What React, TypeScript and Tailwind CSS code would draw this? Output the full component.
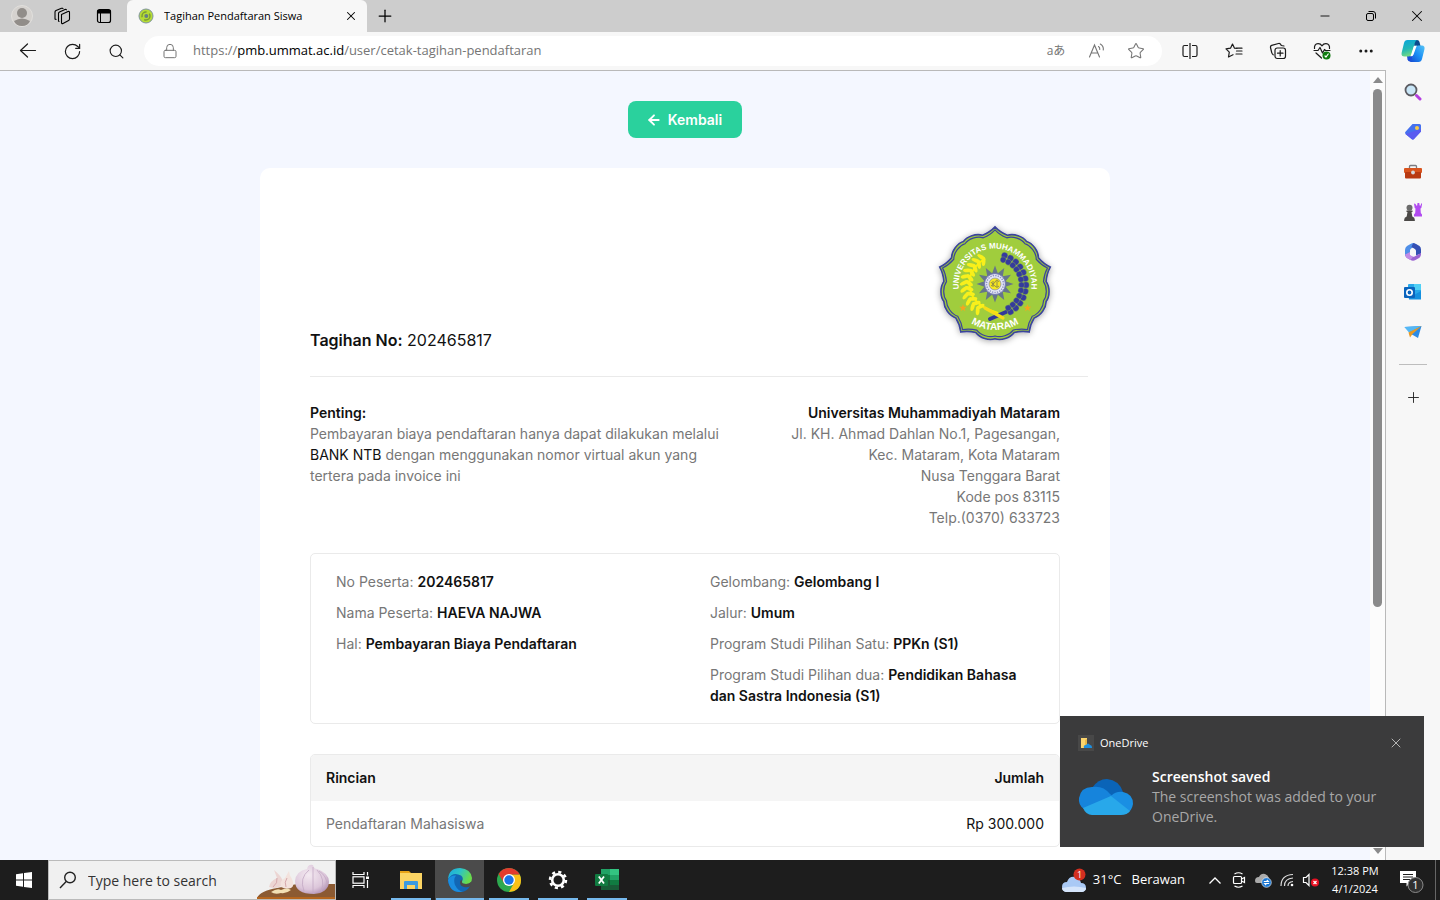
import type { ReactNode } from 'react';
import { ArrowLeft, Lock, Minus, MoreHorizontal, Plus, RotateCw, Search, Star, X } from 'lucide-react';

const details = {
  left: [
    ['No Peserta:', '202465817'],
    ['Nama Peserta:', 'HAEVA NAJWA'],
    ['Hal:', 'Pembayaran Biaya Pendaftaran'],
  ],
  right: [
    ['Gelombang:', 'Gelombang I'],
    ['Jalur:', 'Umum'],
    ['Program Studi Pilihan Satu:', 'PPKn (S1)'],
    ['Program Studi Pilihan dua:', 'Pendidikan Bahasa dan Sastra Indonesia (S1)'],
  ],
};

// polar helper for the crest, angle in degrees clockwise from the top
const polar = (r: number, deg: number, cx = 65, cy = 67) => {
  const a = ((deg - 90) * Math.PI) / 180;
  return `${(cx + r * Math.cos(a)).toFixed(2)} ${(cy + r * Math.sin(a)).toFixed(2)}`;
};

const crestPath = (s: number) => {
  let d = `M${polar(59 * s, 0)}`;
  for (let k = 0; k < 5; k++) {
    const b = k * 72;
    d += `Q${polar(54 * s, b + 5)} ${polar(52 * s, b + 14)}`;
    d += `C${polar(56 * s, b + 20)} ${polar(57 * s, b + 30)} ${polar(54.5 * s, b + 36)}`;
    d += `C${polar(57 * s, b + 42)} ${polar(56 * s, b + 52)} ${polar(52 * s, b + 58)}`;
    d += `Q${polar(54 * s, b + 67)} ${polar(59 * s, b + 72)}`;
  }
  return d + 'Z';
};

const starPoints = (cx: number, cy: number, outer: number, inner: number, n: number) =>
  Array.from({ length: n * 2 }, (_, i) => polar(i % 2 ? inner : outer, (i * 180) / n, cx, cy)).join(' ');

function Crest({ className }: { className?: string }) {
  return (
    <svg viewBox="0 0 130 130" className={className} role="img" aria-label="Universitas Muhammadiyah Mataram">
      <defs>
        <filter id="crest-shadow" x="-20%" y="-20%" width="140%" height="140%">
          <feDropShadow dx="0" dy="1" stdDeviation="3" floodColor="#000" floodOpacity="0.35" />
        </filter>
        <path id="arc-top" d="M31.5 81.500A36.5 36.5 0 1 1 98.500 81.500" />
        <path id="arc-bottom" d="M19 66A46 46 0 0 0 111 66" />
      </defs>
      <path d={crestPath(0.985)} fill="#9fcb3c" stroke="#3b449b" strokeWidth="1.6" filter="url(#crest-shadow)" />
      <path d={crestPath(0.935)} fill="#a0cd3d" stroke="#3b449b" strokeWidth="1.2" />
      <g fill="#fff" className="font-['Liberation_Sans',sans-serif] font-bold">
        <text fontSize="8" textAnchor="middle">
          <textPath href="#arc-top" startOffset="50%">UNIVERSITAS MUHAMMADIYAH</textPath>
        </text>
        <text fontSize="10" textAnchor="middle">
          <textPath href="#arc-bottom" startOffset="50%">MATARAM</textPath>
        </text>
      </g>
      <path d="M54 41Q32 57 43 79Q50 90 68 95" fill="none" stroke="#fff200" strokeWidth="2" />
      {Array.from({ length: 11 }, (_, i) => {
        const deg = 334 - i * 12;
        return (
          <g key={i} fill="#f8ef1c">
            <ellipse rx="4.6" ry="1.900" transform={`translate(${polar(31, deg)}) rotate(${deg + 60})`} />
            <ellipse rx="4.4" ry="1.900" transform={`translate(${polar(26, deg)}) rotate(${deg + 120})`} />
          </g>
        );
      })}
      <path d="M76 94L60 101" stroke="#32389a" strokeWidth="4" strokeLinecap="round" />
      <path d="M55 90L73 100" stroke="#f5dc18" strokeWidth="3.200" strokeLinecap="round" />
      {Array.from({ length: 12 }, (_, i) => {
        const deg = 18 + i * 12;
        return (
          <g key={i} fill="#353b9c" stroke="#a0cd3d" strokeWidth="0.3">
            <ellipse rx="3.200" ry="3.200" transform={`translate(${polar(31, deg)}) rotate(${deg})`} />
            <ellipse rx="3" ry="3" transform={`translate(${polar(26.5, deg)}) rotate(${deg})`} />
          </g>
        );
      })}
      <polygon points={starPoints(65, 66, 18.5, 11, 12)} fill="#66758a" />
      <circle cx="65" cy="66" r="10.5" fill="#e8eaf4" stroke="#7176b5" strokeWidth="1" />
      <circle cx="65" cy="66" r="8.5" fill="none" stroke="#8f94c8" strokeWidth="1.5" strokeDasharray="1.4 1.1" />
      <circle cx="65" cy="66" r="6" fill="#f6e821" stroke="#7176b5" strokeWidth="0.6" />
      <path d="M61 64q2 4 4 0t4 0M61 68q2-3 4 0t4 0M63 63v6M67 63v6" fill="none" stroke="#7d7a4c" strokeWidth="0.8" />
      <polygon points={starPoints(33, 90, 4, 1.6, 5)} fill="#f7a51f" />
      <polygon points={starPoints(97.5, 90, 4, 1.6, 5)} fill="#f7a51f" />
    </svg>
  );
}

function Favicon() {
  return (
    <svg viewBox="0 0 16 16" className="size-4 shrink-0">
      <circle cx="8" cy="8" r="7" fill="#b5dc35" stroke="#7f94a0" />
      <circle cx="8" cy="8" r="4" fill="none" stroke="#7a9a35" strokeWidth="1.4" strokeDasharray="8 3" />
      <circle cx="8.300" cy="8" r="2" fill="#667e85" />
    </svg>
  );
}

function ToolButton({ label, className = 'w-11', children }: { label: string; className?: string; children: ReactNode }) {
  return (
    <button aria-label={label} className={`flex h-full shrink-0 items-center justify-center ${className}`}>
      {children}
    </button>
  );
}

function TabStrip() {
  return (
    <header className="flex h-8 shrink-0 items-center bg-[#cdcdcd] text-black">
      <ToolButton label="Profile">
        <svg viewBox="0 0 22 22" className="size-[22px]">
          <circle cx="11" cy="11" r="10.500" fill="#d5d2cf" stroke="#e1dfdc" />
          <circle cx="11" cy="8" r="5" fill="#918d89" />
          <path d="M3 16q8-5 16 0q-2 5-8 5t-8-5z" fill="#918d89" />
        </svg>
      </ToolButton>
      <ToolButton label="Workspaces" className="w-9">
        <svg viewBox="0 0 18 18" className="size-[18px]" fill="none" stroke="currentColor" strokeWidth="1.100" strokeLinejoin="round">
          <path d="M8.500 7.500L15 4.500q1.500-.5 1.500 1v6.500q0 1-.9 1.500L10 16.500q-1.500.6-1.500-1z" />
          <path d="M6.500 14.500l-1-.3V6.500q0-1 1-1.500L12 2.500q1.500-.4 1.500.7" />
          <path d="M3.500 12.500l-1.500-.4V5q0-1 1-1.500L8.500 1.300q1.500-.4 1.500.7" />
        </svg>
      </ToolButton>
      <ToolButton label="Tab actions" className="w-[47px]">
        <svg viewBox="0 0 16 16" className="size-4">
          <rect x="1.500" y="1.500" width="13" height="13" rx="2" fill="none" stroke="currentColor" strokeWidth="1.200" />
          <path d="M1.500 2h13v3.500h-13z" fill="currentColor" />
          <path d="M4.500 5v9.500" stroke="currentColor" />
        </svg>
      </ToolButton>
      <div className="flex h-full w-60 items-center rounded-t-md bg-[#f7f7f7] pl-[11px] pr-2">
        <Favicon />
        <span className="ml-2.5 flex-1 truncate text-[11px]">Tagihan Pendaftaran Siswa</span>
        <button aria-label="Close tab" className="flex size-4 items-center justify-center">
          <X size={14} strokeWidth={1.8} />
        </button>
      </div>
      <ToolButton label="New tab" className="w-[35px]">
        <Plus size={20} strokeWidth={1.5} />
      </ToolButton>
      <div className="ml-auto flex h-full">
        <ToolButton label="Minimize" className="w-[46px]">
          <Minus size={14} strokeWidth={1.5} />
        </ToolButton>
        <ToolButton label="Restore" className="w-[46px]">
          <svg viewBox="0 0 12 12" className="size-3" fill="none" stroke="currentColor">
            <rect x="1.500" y="3.500" width="7" height="7" rx="1.500" />
            <path d="M3.500 1.500H8q2.500 0 2.500 2.500v4.500" />
          </svg>
        </ToolButton>
        <ToolButton label="Close" className="w-[46px]">
          <X size={18} strokeWidth={1.4} />
        </ToolButton>
      </div>
    </header>
  );
}

function CopilotIcon() {
  return (
    <svg viewBox="0 0 24 24" className="size-6">
      <defs>
        <linearGradient id="cp-a" x1="0" y1="0" x2="0.300" y2="1">
          <stop offset="0" stopColor="#08a4dc" />
          <stop offset="0.600" stopColor="#23b8b5" />
          <stop offset="1" stopColor="#72d984" />
        </linearGradient>
        <linearGradient id="cp-b" x1="1" y1="0" x2="0" y2="1">
          <stop offset="0" stopColor="#56c4f5" />
          <stop offset="0.500" stopColor="#1b8ff5" />
          <stop offset="1" stopColor="#1646cf" />
        </linearGradient>
      </defs>
      <path d="M12 1h4q2 0 2.500 2l1 4h-6z" fill="#0a4a8c" />
      <path d="M6 17h6l-1.500 5.500H9q-2 0-2.500-2z" fill="#1c4fd8" />
      <path d="M6.500 1H16q-1.500.5-2.200 3l-3 11q-.8 2.500-3.300 2.500H3.500Q0 17.500.6 14L3 4q.7-3 3.500-3z" fill="url(#cp-a)" />
      <path d="M17.500 23H8.500q1.500-.5 2.200-3l3-11q.8-2.500 3.300-2.500h4q3 0 2.500 3.500L21 20q-.7 3-3.500 3z" fill="url(#cp-b)" />
      <path d="M12.800 7.500q1-1 3-1l-3.300 9q-1 2-3 2z" fill="#fff" />
    </svg>
  );
}

function Toolbar() {
  return (
    <div className="flex h-[38px] shrink-0 items-center bg-[#f7f7f7] pl-1.5 text-[#1b1b1b]">
      <ToolButton label="Back">
        <svg viewBox="0 0 18 16" className="h-4 w-[18px]" fill="none" stroke="currentColor" strokeWidth="1.200" strokeLinecap="round" strokeLinejoin="round">
          <path d="M16.500 7.500H1.500M8.500 1L1.500 7.500L8.500 14" />
        </svg>
      </ToolButton>
      <ToolButton label="Refresh">
        <RotateCw size={19} strokeWidth={1.5} />
      </ToolButton>
      <ToolButton label="Search">
        <Search size={17} strokeWidth={1.6} />
      </ToolButton>
      <div className="ml-1.5 mr-1.5 flex h-[30px] flex-1 items-center rounded-full bg-white pl-[18px] pr-1.5 text-[#757575]">
        <Lock size={16} strokeWidth={1.5} />
        <div role="textbox" aria-label="Address" contentEditable suppressContentEditableWarning className="ml-[15px] flex-1 truncate text-[13px] outline-none">
          https://<span className="text-black">pmb.ummat.ac.id</span>/user/cetak-tagihan-pendaftaran
        </div>
        <button aria-label="Translate" className="w-10 font-['Open_Sans','Noto_Sans_CJK_JP',sans-serif] text-[12px]">
          aあ
        </button>
        <button aria-label="Read aloud" className="flex w-10 justify-center">
          <svg viewBox="0 0 17 16" className="h-4 w-[17px]" fill="none" stroke="currentColor" strokeWidth="1.100" strokeLinecap="round">
            <path d="M1.500 14L6.500 2L11.500 14M3.200 10h6.600M10.500 3.500q1.500 1 1.300 3M12.300 1q3.500 2 3 6" />
          </svg>
        </button>
        <button aria-label="Add to favorites" className="flex w-10 justify-center">
          <Star size={18} strokeWidth={1.4} />
        </button>
      </div>
      <ToolButton label="Split screen">
        <svg viewBox="0 0 16 16" className="size-4" fill="none" stroke="currentColor" strokeWidth="1.200">
          <path d="M6 2.500H2.500Q1 2.500 1 4v8q0 1.500 1.500 1.500H6M10 2.500h3.500Q15 2.500 15 4v8q0 1.500-1.500 1.500H10M8 0v16" />
        </svg>
      </ToolButton>
      <ToolButton label="Favorites">
        <svg viewBox="0 0 18 16" className="h-4 w-[18px]" fill="none" stroke="currentColor" strokeWidth="1.200" strokeLinejoin="round" strokeLinecap="round">
          <path d="M12 5.500L9.500 5.200L7.500 1L5.500 5.200L1 5.900L4.300 9.200L3.500 14L8 11.700M11.500 8H17M11 5.200h6M11 11h6" />
        </svg>
      </ToolButton>
      <ToolButton label="Collections">
        <svg viewBox="0 0 18 18" className="size-[18px]" fill="none" stroke="currentColor" strokeWidth="1.200" strokeLinecap="round">
          <rect x="6" y="6" width="10.500" height="10.500" rx="2.200" />
          <path d="M11.200 8.500v5.500M8.500 11.200H14M4.200 12.800Q3 12 2.700 10.500L1.500 5.500Q1.200 4 2.700 3.400L9.500 1.500Q11.500 1 12.300 3.500M12.300 3.500L15 4" />
        </svg>
      </ToolButton>
      <ToolButton label="Browser essentials">
        <svg viewBox="0 0 18 18" className="size-[18px]" fill="none" stroke="currentColor" strokeWidth="1.200" strokeLinecap="round" strokeLinejoin="round">
          <path d="M1.500 6.500Q1 2 5 1.700Q7.500 1.600 9 3.800Q10.500 1.600 13 1.700Q17 2 16.500 6.500M1 8.500h4L7 5.500L9.500 11L11.500 7.500L12.500 8.500H17M3 11L8.500 16" />
          <circle cx="13.500" cy="13.500" r="4" fill="#107c10" stroke="none" />
          <path d="M12 14l1 1l2.200-3" stroke="#fff" />
        </svg>
      </ToolButton>
      <ToolButton label="Settings and more">
        <MoreHorizontal size={18} strokeWidth={2} />
      </ToolButton>
      <ToolButton label="Copilot" className="w-[52px] pr-0.5">
        <CopilotIcon />
      </ToolButton>
    </div>
  );
}

const sidebarItems: { label: string; icon: ReactNode }[] = [
  {
    label: 'Search',
    icon: (
      <>
        <path d="M12.500 12.500L16 16" stroke="#b43ee0" strokeWidth="3" strokeLinecap="round" />
        <circle cx="7" cy="7" r="5.500" fill="#c9e6f7" stroke="#5c5c62" strokeWidth="1.800" />
      </>
    ),
  },
  {
    label: 'Shopping',
    icon: (
      <>
        <path d="M8.500 1h7q1.500 0 1.500 1.500v6L10 16q-1.200 1-2.400 0L1.500 11q-1-1.200 0-2.300z" fill="#4571ee" />
        <path d="M1.500 11L7.600 16q1.200 1 2.400 0L17 8.500V6z" fill="#5a5cf0" />
        <circle cx="13" cy="5" r="2" fill="#f7c948" />
      </>
    ),
  },
  {
    label: 'Tools',
    icon: (
      <>
        <path d="M5.500 5V3.500Q5.500 2.500 6.500 2.500h5q1 0 1 1V5" fill="none" stroke="#7b7b80" strokeWidth="1.300" />
        <rect x="0" y="5" width="18" height="5" rx="1" fill="#d9541e" />
        <rect x="1" y="9" width="16" height="6.500" rx="1" fill="#b83a12" />
        <circle cx="9" cy="9.500" r="1.900" fill="#d5d8dc" />
      </>
    ),
  },
  {
    label: 'Games',
    icon: (
      <>
        <path d="M10 .5l1.700.4.3 1.600h1.200L13.500 0h1.800l.3 2.500h1.200L17 .5h1.200L17.300 5l-.8.500.3 4.500 1.200 1.500v2h-8v-2l1.200-1.500.3-4.500-.8-.5z" fill="#b14bf0" />
        <circle cx="5.500" cy="4.800" r="3" fill="#6b6b6b" />
        <path d="M2.500 7.500h6v1.500h-1l.8 4.500q3 1 2.500 4.500H.2q-.5-3.500 2.500-4.500l.8-4.500h-1z" fill="#4b4947" />
      </>
    ),
  },
  {
    label: 'Microsoft 365',
    icon: (
      <>
        <path d="M10 0Q8 0 6.500 1L3 3Q1 4.500 1 7v4q0 2 1.500 3L6 11.500V7.500Q6 6 7.500 5.200L13 2z" fill="#4f8fe8" />
        <path d="M9 .2Q10.500 0 12 1l3.500 2Q17 4 17 6.500v4l-5 2V8Q12 6.500 10.500 5.700L7.500 4z" fill="#3450b4" />
        <path d="M1.200 11.500Q1.500 14 3 15l3.500 2q2.500 1.300 5 0l4-2.300Q17 13.500 17 11v-1L11 13.300q-2 1-3.500 0L5 12z" fill="#9b63d2" />
        <path d="M1.200 11.500Q1.500 14 3 15l3.500 2L9 13.800L6 12V9z" fill="#c18be6" />
        <circle cx="9" cy="9.200" r="2.800" fill="#f7f7f7" />
      </>
    ),
  },
  {
    label: 'Outlook',
    icon: (
      <>
        <rect x="4" y="1" width="13" height="13" rx="1" fill="#28a8ea" />
        <path d="M10 1h7v6h-7z" fill="#50d0f5" />
        <path d="M4 10l6 2l7-4v8.500H5z" fill="#1490df" />
        <rect x="0" y="4" width="11" height="11" rx="1" fill="#0a64bd" />
        <circle cx="5.500" cy="9.500" r="2.700" fill="none" stroke="#fff" strokeWidth="1.600" />
      </>
    ),
  },
  {
    label: 'Drop',
    icon: (
      <>
        <path d="M.5 4L17.500 3L14 15L8 11.500z" fill="#2b8be6" />
        <path d="M.5 4L17.500 3L5 9.500z" fill="#54b8f5" />
        <path d="M17.500 3L4.500 9.500L6 14.500L8.500 11z" fill="#e89a24" />
      </>
    ),
  },
];

function Sidebar() {
  return (
    <aside className="flex w-[54px] shrink-0 flex-col items-center bg-[#f7f7f7] pt-0.5">
      {sidebarItems.map((item) => (
        <button key={item.label} aria-label={item.label} className="flex h-10 w-full items-center justify-center">
          <svg viewBox="0 0 18 18" className="size-[18px]">
            {item.icon}
          </svg>
        </button>
      ))}
      <hr className="mt-3 w-7 border-[#bdbdbd]" />
      <button aria-label="Customize" className="mt-5 flex h-6 w-full items-center justify-center text-[#222]">
        <Plus size={17} strokeWidth={1.3} />
      </button>
    </aside>
  );
}

function DetailColumn({ rows }: { rows: string[][] }) {
  return (
    <dl className="flex flex-col gap-2.5 px-[25px]">
      {rows.map(([label, value]) => (
        <div key={label}>
          <dt className="inline">{label}</dt> <dd className="inline font-semibold text-[#111]">{value}</dd>
        </div>
      ))}
    </dl>
  );
}

function Invoice() {
  return (
    <main className="flex-1 overflow-hidden bg-[#f4f7ff] pt-[30px] font-['Inter',sans-serif] text-[14px] leading-[21px] text-[#777]">
      <div className="flex justify-center">
        <a href="#kembali" className="flex h-[37px] items-center gap-1.5 rounded-lg bg-[#2ad19d] pl-[18px] pr-5 font-semibold text-white">
          <ArrowLeft size={16} strokeWidth={2.8} />
          Kembali
        </a>
      </div>
      <div className="mx-auto mt-[30px] max-w-[850px] rounded-[10px] bg-white px-[50px] pb-12 pt-[50px]">
        <div className="flex items-end justify-between">
          <p className="text-[16px] leading-4 text-[#111]">
            <b className="font-semibold">Tagihan No:</b> 202465817
          </p>
          <Crest className="size-[130px] overflow-visible" />
        </div>
        {/* the rule runs into the right padding of the card */}
        <hr className="-mr-7 mt-7 border-[#eaeaea]" />
        <div className="mt-[25px] flex justify-between gap-5">
          <p className="max-w-[420px]">
            <b className="font-semibold text-[#111]">Penting:</b>
            <br />
            Pembayaran biaya pendaftaran hanya dapat dilakukan melalui <span className="text-[#111]">BANK NTB</span> dengan
            menggunakan nomor virtual akun yang tertera pada invoice ini
          </p>
          <address className="text-right not-italic">
            <b className="font-semibold text-[#111]">Universitas Muhammadiyah Mataram</b>
            <br />
            Jl. KH. Ahmad Dahlan No.1, Pagesangan,
            <br />
            Kec. Mataram, Kota Mataram
            <br />
            Nusa Tenggara Barat
            <br />
            Kode pos 83115
            <br />
            Telp.(0370) 633723
          </address>
        </div>
        <div className="mt-[25px] grid grid-cols-2 rounded-[5px] border border-[#eaeaea] py-[17px]">
          <DetailColumn rows={details.left} />
          <DetailColumn rows={details.right} />
        </div>
        <div className="mt-[30px] overflow-hidden rounded-[5px] border border-[#eaeaea]">
          <table className="w-full">
            <thead>
              <tr className="h-[46px] bg-[#f5f5f5] text-[#111]">
                <th className="px-[15px] pb-0.5 text-left font-semibold">Rincian</th>
                <th className="px-[15px] pb-0.5 text-right font-semibold">Jumlah</th>
              </tr>
            </thead>
            <tbody>
              <tr className="h-[45px]">
                <td className="px-[15px]">Pendaftaran Mahasiswa</td>
                <td className="px-[15px] text-right text-[#111]">Rp 300.000</td>
              </tr>
            </tbody>
          </table>
        </div>
      </div>
    </main>
  );
}

function ScrollTrack() {
  return (
    <div className="flex w-4 shrink-0 flex-col items-center border-r border-[#b9b9b9] bg-[#fcfcfc] py-1.5 text-[#8b8b8b]">
      <svg viewBox="0 0 10 6" className="h-1.5 w-2.5 shrink-0">
        <path d="M0 6L5 0L10 6z" fill="currentColor" />
      </svg>
      <div className="mt-1.5 h-2/3 w-[9px] rounded-full bg-[#8b8b8b]" />
      <svg viewBox="0 0 10 6" className="mt-auto h-1.5 w-2.5 shrink-0">
        <path d="M0 0L5 6L10 0z" fill="currentColor" />
      </svg>
    </div>
  );
}

function CloudIcon({ className }: { className: string }) {
  return (
    <svg viewBox="0 0 54 36" className={className}>
      <path d="M13 9Q19 0 28 0Q40 1 44 13L30 18L10 14z" fill="#0a64b8" />
      <path d="M13 8Q24 6 31 15L43 24L5 30Q-1 26 0 19Q2 8 13 8z" fill="#1684dc" />
      <path d="M32 17Q37 12 44 13Q54 15 54 25Q53 32 47 35L22 22z" fill="#1a8fe3" />
      <path d="M4 29L32 17L51 32Q48 36 42 36H13Q7 36 4 29z" fill="#28a8ea" />
    </svg>
  );
}

function Toast() {
  return (
    <section role="status" className="absolute bottom-[53px] right-4 w-[364px] bg-[#3b3b3c] pb-5 pl-[18px] pr-4 pt-[19px] text-[#a8a8a8]">
      <div className="flex h-4 items-center">
        <span className="flex size-4 items-center justify-center bg-[#484848]">
          <svg viewBox="0 0 12 12" className="size-3">
            <path d="M1 1h6v10H1z" fill="#fbd56e" />
            <path d="M5 3l2-1v8H5z" fill="#e9b949" />
            <path d="M4 11q-1-3 2-3q2-3 4 0q2 0 2 3z" fill="#1c8fe2" />
          </svg>
        </span>
        <span className="ml-1.5 flex-1 text-[11px] text-white">OneDrive</span>
        <button aria-label="Dismiss" className="flex size-6 items-center justify-center text-[#b5b5b5]">
          <X size={16} strokeWidth={1.5} />
        </button>
      </div>
      <div className="mt-4 flex items-center">
        <CloudIcon className="h-9 w-14 shrink-0" />
        <div className="ml-[18px] text-[14px] leading-5">
          <p className="font-semibold text-white">Screenshot saved</p>
          <p>
            The screenshot was added to your
            <br />
            OneDrive.
          </p>
        </div>
      </div>
    </section>
  );
}

const taskApps: { label: string; active?: boolean; bar: string; icon: ReactNode }[] = [
  {
    label: 'File Explorer',
    bar: 'w-10',
    icon: (
      <>
        <path d="M1 3h9l2 2h-11z" fill="#e8a317" />
        <path d="M1 5h22v16H1z" fill="#fbd463" />
        <path d="M5 21v-7q0-1 1-1h12q1 0 1 1v7h-3v-4H8v4z" fill="#3b9be0" />
      </>
    ),
  },
  {
    label: 'Microsoft Edge',
    active: true,
    bar: 'w-12',
    icon: (
      <>
        <defs>
          <linearGradient id="edge-g" x1="0" y1="0" x2="1" y2="0.400">
            <stop offset="0" stopColor="#1ba7e0" />
            <stop offset="0.500" stopColor="#2cc3c8" />
            <stop offset="1" stopColor="#69dc4c" />
          </linearGradient>
        </defs>
        <path d="M0 12Q1 4 9 5Q15 6 15 11L14 16q2 3 8 2q-3 6-10 6Q1 23.500 0 12z" fill="#1267b5" />
        <path d="M0 11Q1 0 12 0Q23 1 24 10Q24 16 18 16Q13 16 14 13.500Q16 10 13 7.500Q5 3 0 11z" fill="url(#edge-g)" />
        <path d="M0 12Q2 7 8 7.500Q5 11 7 17Q10 23 15 23.500Q2 26 0 12z" fill="#1b8de0" />
        <path d="M14 13.500q-.5 2.500 4 2.500q3 0 5-2l-.5 4q-3 2-6.500 1q-4-1-4-4.500q0-2 1.500-3z" fill="#4b4b4b" />
      </>
    ),
  },
  {
    label: 'Google Chrome',
    bar: 'w-10',
    icon: (
      <>
        <circle cx="12" cy="12" r="12" fill="#2da94f" />
        <path d="M12 6.500h10.700Q24 9 24 12q0 11-12 12l5-9z" fill="#fbc116" />
        <path d="M1.600 6Q5 0 12 0t10.700 6.500H12L7 15z" fill="#e33b2e" />
        <circle cx="12" cy="12" r="6" fill="#fff" />
        <circle cx="12" cy="12" r="4.700" fill="#1a73e8" />
      </>
    ),
  },
  {
    label: 'Settings',
    bar: 'w-10',
    icon: (
      <>
        <circle cx="12" cy="12" r="8" fill="none" stroke="#fff" strokeWidth="2.500" strokeDasharray="3.140 3.140" />
        <circle cx="12" cy="12" r="5.800" fill="none" stroke="#fff" strokeWidth="2.600" />
      </>
    ),
  },
  {
    label: 'Excel',
    bar: 'w-10',
    icon: (
      <>
        <path d="M6 1h9v6H6z" fill="#21a366" />
        <path d="M15 1h9v6h-9z" fill="#33c481" />
        <path d="M6 7h9v5H6z" fill="#107c41" />
        <path d="M15 7h9v5h-9z" fill="#21a366" />
        <path d="M6 12h18v10H6z" fill="#185c37" />
        <path d="M15 12h9v5h-9z" fill="#107c41" />
        <rect x="0" y="6" width="13" height="12" rx="1" fill="#117b41" />
        <path d="M3.800 8.500L9 15.500M9 8.500L3.800 15.500" stroke="#fff" strokeWidth="1.800" />
      </>
    ),
  },
];

function Garlic() {
  return (
    <svg viewBox="0 0 78 40" preserveAspectRatio="xMidYMid slice" className="h-full w-[78px] shrink-0">
      <defs>
        <radialGradient id="bulb" cx="0.400" cy="0.350" r="0.700">
          <stop offset="0" stopColor="#f4eaf1" />
          <stop offset="0.700" stopColor="#dcc6da" />
          <stop offset="1" stopColor="#b495b6" />
        </radialGradient>
      </defs>
      <path d="M0 38Q3 31 20 28L40 24H78V40H0z" fill="#8b5a32" />
      <path d="M0 37H78V40H0z" fill="#b5651d" />
      <path d="M12 27q1-6 8-9l-3-8q6 5 8 9q3 6-3 8q-5 2-10 0z" fill="#ecd5d3" />
      <path d="M24 27q-2-6 4-9l4-7q0 4 3 8q3 7-1 9q-5 2-10-1z" fill="#f3e2dd" />
      <path d="M20 18q1 5-4 9M30 18q-3 4-1 9" fill="none" stroke="#d6a8ac" />
      <path d="M14 32q6-4 10-2q6-3 10 0q-5 4-10 3q-6 2-10-1z" fill="#f2e0b5" />
      <path d="M38 21q1-10 12-12q1-5 6-4q1 4 4 4q12 4 12 13q-1 11-15 12q-19 0-19-13z" fill="url(#bulb)" />
      <path d="M52 10q-10 8-5 21M60 10q9 9 4 22M62 11q8 5 8 14M56 7v26" fill="none" stroke="#c3a8c4" strokeWidth="0.800" />
    </svg>
  );
}

function Taskbar() {
  return (
    <footer className="flex h-10 shrink-0 items-stretch bg-[#1d1d1d] text-white">
      <button aria-label="Start" className="flex w-12 items-center justify-center">
        <svg viewBox="0 0 16 16" className="size-4" fill="#fff">
          <path d="M0 2.200L7 1.200V7.500H0zM8 1L16 0v7.500H8zM0 8.500h7v6.300l-7-1zM8 8.500h8V16l-8-1z" />
        </svg>
      </button>
      <label className="flex w-72 items-center border border-[#bababa] bg-[#f0f0f0] pl-2.5 text-[#222]">
        <svg viewBox="0 0 18 18" className="size-[18px] shrink-0" fill="none" stroke="currentColor" strokeWidth="1.400">
          <circle cx="11" cy="6.500" r="5.300" />
          <path d="M7.200 10.500L1 17" />
        </svg>
        <input aria-label="Search" placeholder="Type here to search" className="ml-[11px] w-0 flex-1 bg-transparent text-[14px] outline-none placeholder:text-[#333]" />
        <Garlic />
      </label>
      <button aria-label="Task view" className="flex w-[50px] items-center justify-center">
        <svg viewBox="0 0 18 16" className="h-4 w-[18px]" fill="none" stroke="#fff" strokeWidth="1.200">
          <path d="M1 0v2.500h11V0M1 16v-2.500h11V16M15.500 0v3.500M15.500 8v8" />
          <rect x="1" y="4.800" width="11" height="6.400" />
          <path d="M14 4.500h3v2.500h-3z" fill="#fff" stroke="none" />
        </svg>
      </button>
      {taskApps.map((app) => (
        <button key={app.label} aria-label={app.label} className={`flex w-[49px] flex-col items-center justify-between ${app.active ? 'bg-[#4b4b4b]' : ''}`}>
          <svg viewBox="0 0 24 24" className="mt-2 size-6">
            {app.icon}
          </svg>
          <span className={`h-0.5 bg-[#76b9ed] ${app.bar}`} />
        </button>
      ))}
      <div className="ml-auto flex items-center">
        <button className="flex items-center text-[13px]">
          <svg viewBox="0 0 26 24" className="mr-1.5 h-6 w-[26px]">
            <path d="M1 19q0-5 5-5q2-6 8-5q5 1 6 6q5 0 5 5q0 3-4 4H5q-4-1-4-5z" fill="#a9c9f5" />
            <path d="M1 20q12-3 24 0q0 3-4 4H5q-4-1-4-4z" fill="#d5e5fb" />
            <circle cx="18.500" cy="6.500" r="6" fill="#d32f20" />
            <text x="18.500" y="9.500" fontSize="9" textAnchor="middle" fill="#fff">1</text>
          </svg>
          31°C<span className="ml-2.5">Berawan</span>
        </button>
        <button aria-label="Show hidden icons" className="ml-[18px] flex w-6 justify-center">
          <svg viewBox="0 0 12 7" className="h-[7px] w-3" fill="none" stroke="#fff" strokeWidth="1.300">
            <path d="M.5 6.500L6 1L11.500 6.500" />
          </svg>
        </button>
        <button aria-label="Meet now" className="flex w-6 justify-center">
          <svg viewBox="0 0 14 16" className="h-4 w-3.5" fill="none" stroke="#fff" strokeWidth="1.200">
            <rect x="1.500" y="4.500" width="8" height="7" rx="1" />
            <path d="M9.500 7l3-1.500v5l-3-1.500M2.500 2q4-2.500 8 0M2.500 14q4 2.500 8 0" />
          </svg>
        </button>
        <button aria-label="OneDrive" className="flex w-6 justify-center">
          <svg viewBox="0 0 18 16" className="h-4 w-[18px]">
            <path d="M1 9q0-4 4-4q2-4 6-3q3 1 4 4v5H3q-2 0-2-2z" fill="#aaa" />
            <circle cx="12.500" cy="10.500" r="4.800" fill="#1976d2" stroke="#fff" strokeWidth="0.600" />
            <path d="M9.800 9.500h4.500l-1.500-1.500M15.200 11.500h-4.500l1.500 1.500" fill="none" stroke="#fff" strokeWidth="1.100" />
          </svg>
        </button>
        <button aria-label="Network" className="flex w-6 justify-center">
          <svg viewBox="0 0 14 14" className="size-3.5" fill="none" stroke="#ddd" strokeWidth="1.200">
            <path d="M1 13Q1 2 13 1.500M4.500 13Q4.500 5.500 13 5M8 13Q8 9 13 8.500" />
            <circle cx="12" cy="12" r="1.300" fill="#fff" stroke="none" />
          </svg>
        </button>
        <button aria-label="Volume muted" className="flex w-6 justify-center">
          <svg viewBox="0 0 18 14" className="h-3.5 w-[18px]" fill="none" stroke="#fff" strokeWidth="1.200">
            <path d="M1.500 4.500h2.500L7 1.500v11L4 9.500H1.500z" />
            <circle cx="13" cy="9.500" r="4" fill="#e81123" stroke="none" />
            <path d="M11.500 8l3 3M14.500 8l-3 3" />
          </svg>
        </button>
        <div className="w-16 text-center text-[11px] leading-[18px]">
          <p>12:38 PM</p>
          <p>4/1/2024</p>
        </div>
        <button aria-label="Notifications" className="ml-3 mr-2.5 flex">
          <svg viewBox="0 0 26 26" className="size-[26px]">
            <path d="M1 4h16v12h-6l-3.500 3.500V16H1z" fill="#fff" />
            <path d="M4 7.500h10M4 10h10M4 12.500h7" stroke="#1d1d1d" />
            <circle cx="16.500" cy="18" r="7.500" fill="#303030" stroke="#8a8a8a" />
            <text x="16.500" y="22" fontSize="11" textAnchor="middle" fill="#fff">1</text>
          </svg>
        </button>
        <span className="mr-1 h-10 w-px bg-[#666]" />
      </div>
    </footer>
  );
}

export default function App() {
  return (
    <div className="relative flex h-screen flex-col overflow-hidden font-['Open_Sans','Noto_Sans',sans-serif]">
      <TabStrip />
      <Toolbar />
      <div className="flex min-h-0 flex-1">
        <div className="flex min-w-0 flex-1 border-t border-[#b9b9b9]">
          <Invoice />
          <ScrollTrack />
        </div>
        <Sidebar />
      </div>
      <Taskbar />
      <Toast />
    </div>
  );
}
